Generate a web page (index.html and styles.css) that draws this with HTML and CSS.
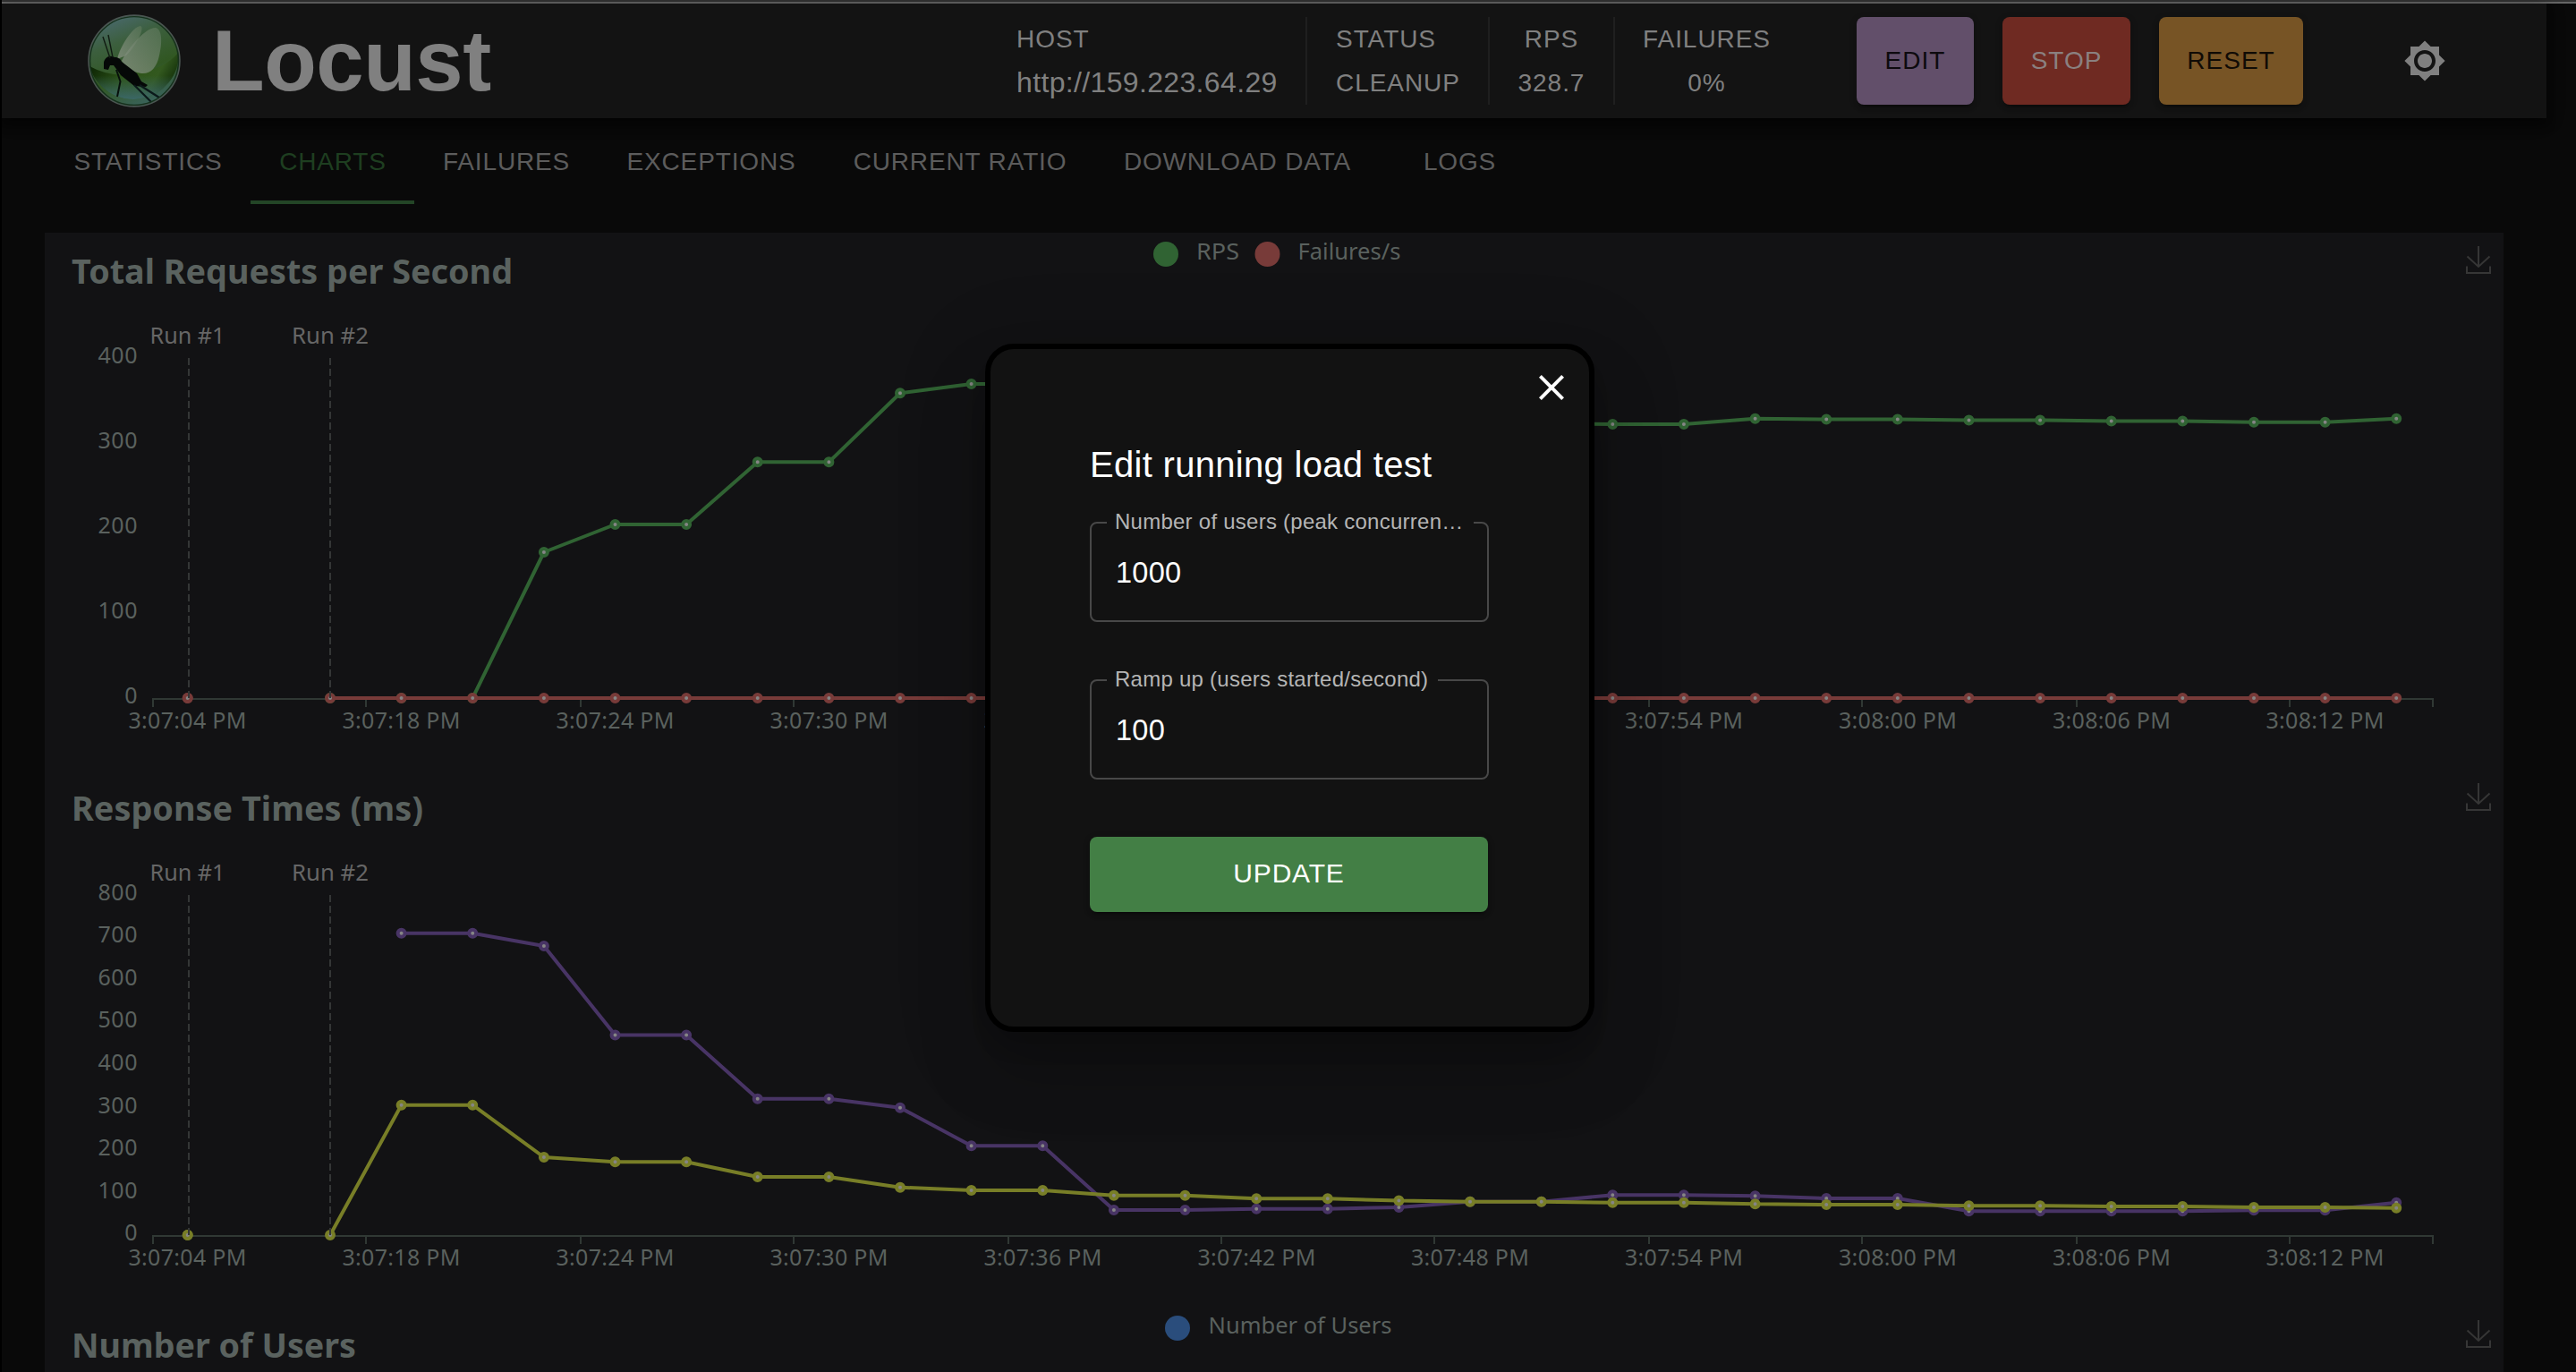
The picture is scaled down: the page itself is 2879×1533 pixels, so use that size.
FILE: index.html
```html
<!DOCTYPE html>
<html lang="en">
<head>
<meta charset="utf-8">
<title>Locust</title>
<link rel="stylesheet" href="styles.css">
</head>
<body>
<div class="progress"></div>
<header class="topbar">
  <svg class="logo" viewBox="0 0 104 104" aria-hidden="true">
    <defs>
      <linearGradient id="glass" x1="0.2" y1="0" x2="0.6" y2="1">
        <stop offset="0" stop-color="#4b6a72"/><stop offset="0.3" stop-color="#3c5f3e"/><stop offset="0.65" stop-color="#315722"/><stop offset="1" stop-color="#3a635c"/>
      </linearGradient>
      <linearGradient id="lower" x1="0" y1="0.3" x2="1" y2="0.6">
        <stop offset="0" stop-color="#0c2404"/><stop offset="0.4" stop-color="#2c5218"/><stop offset="0.75" stop-color="#33591f"/><stop offset="1" stop-color="#0d2805"/>
      </linearGradient>
      <linearGradient id="glow" x1="0" y1="0" x2="0" y2="1">
        <stop offset="0.5" stop-color="#3b6766" stop-opacity="0"/><stop offset="1" stop-color="#3b6766"/>
      </linearGradient>
      <linearGradient id="wing" x1="0" y1="1" x2="1" y2="0">
        <stop offset="0" stop-color="#8b9486"/><stop offset="1" stop-color="#587456"/>
      </linearGradient>
    </defs>
    <circle cx="52" cy="52" r="51" fill="url(#glass)"/>
    <path d="M2 58Q24 70 48 67Q86 62 102 42A51 51 0 0 1 2 58Z" fill="url(#lower)"/>
    <path d="M2 58Q24 70 48 67Q86 62 102 42A51 51 0 0 1 2 58Z" fill="url(#glow)"/>
    <path d="M33 50C36 36 50 14 59 13C64 14 56 33 43 46Z" fill="url(#wing)" opacity=".75"/>
    <path d="M38 52C46 36 66 14 76 15C84 17 83 34 80 46C77 60 70 67 60 66C50 65 42 58 38 52Z" fill="url(#wing)" opacity=".75"/>
    <path d="M18 54C19 48 25 45 30 48C34 48 37 50 38 53L55 66L60 75L67 79L65 81L52 80L37 68L29 57L25 57L23 62L18 61Z" fill="#050807"/>
    <path d="M17 25L25 49M23 23L28 48" fill="none" stroke="#101b12" stroke-width="1.4"/>
    <path d="M32 62L36.5 75L33 92" fill="none" stroke="#07100b" stroke-width="2"/>
    <path d="M52 79L71 98M58 79L80 93" fill="none" stroke="#0b191a" stroke-width="2.2"/>
    <circle cx="52" cy="52" r="51" fill="none" stroke="#4c5652" stroke-width="1.5"/>
    <circle cx="52" cy="52" r="49.4" fill="none" stroke="#16301c" stroke-width="1.4"/>
  </svg>
  <h1 class="brand">Locust</h1>
  <div class="stats">
    <div class="stat stat-host"><span>HOST</span><span class="host-url">http://159.223.64.29</span></div>
    <div class="stat stat-status"><span>STATUS</span><span>CLEANUP</span></div>
    <div class="stat stat-rps"><span>RPS</span><span>328.7</span></div>
    <div class="stat stat-fail"><span>FAILURES</span><span>0%</span></div>
  </div>
  <div class="actions">
    <button class="btn btn-edit">EDIT</button>
    <button class="btn btn-stop">STOP</button>
    <button class="btn btn-reset">RESET</button>
  </div>
  <svg class="theme-icon" viewBox="0 0 24 24"><path d="M20 8.69V4h-4.69L12 .69 8.69 4H4v4.69L.69 12 4 15.31V20h4.69L12 23.31 15.31 20H20v-4.69L23.31 12 20 8.69zM12 18c-3.31 0-6-2.69-6-6s2.69-6 6-6 6 2.69 6 6-2.69 6-6 6zm0-10c-2.21 0-4 1.79-4 4s1.79 4 4 4 4-1.79 4-4-1.79-4-4-4z"/></svg>
</header>
<nav class="tabs">
  <a class="tab tab-statistics">STATISTICS</a>
  <a class="tab tab-charts active">CHARTS</a>
  <a class="tab tab-failures">FAILURES</a>
  <a class="tab tab-exceptions">EXCEPTIONS</a>
  <a class="tab tab-ratio">CURRENT RATIO</a>
  <a class="tab tab-download">DOWNLOAD DATA</a>
  <a class="tab tab-logs">LOGS</a>
</nav>
<main class="charts">
  <svg class="chart" viewBox="50 260 2748 600">
    <defs>
      <marker id="dot-green" markerUnits="userSpaceOnUse" markerWidth="14" markerHeight="14" refX="7" refY="7"><circle class="dot green" cx="7" cy="7" r="4"/></marker>
      <marker id="dot-red" markerUnits="userSpaceOnUse" markerWidth="14" markerHeight="14" refX="7" refY="7"><circle class="dot red" cx="7" cy="7" r="4"/></marker>
      <marker id="dot-purple" markerUnits="userSpaceOnUse" markerWidth="14" markerHeight="14" refX="7" refY="7"><circle class="dot purple" cx="7" cy="7" r="4"/></marker>
      <marker id="dot-yellow" markerUnits="userSpaceOnUse" markerWidth="14" markerHeight="14" refX="7" refY="7"><circle class="dot yellow" cx="7" cy="7" r="4"/></marker>
      <g id="axis">
        <path class="axis" d="M170 781H2720M171 781v9M409 781v9M649 781v9M887 781v9M1127 781v9M1365 781v9M1603 781v9M1843 781v9M2081 781v9M2321 781v9M2559 781v9M2719 781v9"/>
        <g class="label middle">
          <text x="209.5" y="813.5" textLength="132">3:07:04 PM</text>
          <text x="448.5" y="813.5" textLength="132">3:07:18 PM</text>
          <text x="687.5" y="813.5" textLength="132">3:07:24 PM</text>
          <text x="926.5" y="813.5" textLength="132">3:07:30 PM</text>
          <text x="1165.5" y="813.5" textLength="132">3:07:36 PM</text>
          <text x="1404.5" y="813.5" textLength="132">3:07:42 PM</text>
          <text x="1643" y="813.5" textLength="132">3:07:48 PM</text>
          <text x="1882" y="813.5" textLength="132">3:07:54 PM</text>
          <text x="2121" y="813.5" textLength="132">3:08:00 PM</text>
          <text x="2360" y="813.5" textLength="132">3:08:06 PM</text>
          <text x="2598.5" y="813.5" textLength="132">3:08:12 PM</text>
        </g>
      </g>
      <g id="runs">
        <path class="run-line" d="M211 400V780M369 400V780"/>
        <g class="run-label middle">
          <text x="209.5" y="384" textLength="84" lengthAdjust="spacingAndGlyphs">Run #1</text>
          <text x="369" y="384" textLength="86" lengthAdjust="spacingAndGlyphs">Run #2</text>
        </g>
      </g>
      <path id="download" class="download" d="M2770 275V298M2757.5 286.5L2770 298L2782.500 286.5M2757 297.5V305H2783V297.5"/>
    </defs>
    <text class="title" x="80" y="317" textLength="493" lengthAdjust="spacingAndGlyphs">Total Requests per Second</text>
    <circle class="fill-green" cx="1303" cy="284" r="14"/>
    <text class="label" x="1337" y="290" textLength="48" lengthAdjust="spacingAndGlyphs">RPS</text>
    <circle class="fill-red" cx="1416.5" cy="284" r="14"/>
    <text class="label" x="1450.500" y="290" textLength="115" lengthAdjust="spacingAndGlyphs">Failures/s</text>
    <use href="#download"/>
    <g class="label end">
      <text x="153.500" y="405.5" textLength="44">400</text>
      <text x="153.500" y="500.8" textLength="44">300</text>
      <text x="153.500" y="596" textLength="44">200</text>
      <text x="153.500" y="691" textLength="44">100</text>
      <text x="153.500" y="786">0</text>
    </g>
    <use href="#axis"/>
    <polyline class="line green" points="369,780 448.6,780 528.2,780 607.9,617 687.5,586 767.1,586 846.7,516.3 926.4,516.3 1006,439.3 1085.6,429 1165.3,429 1244.9,440 1324.5,450 1404.2,458 1483.8,465 1563.4,470 1643,473 1722.7,473.4 1802.3,474 1881.9,474 1961.6,467.8 2041.2,468.5 2120.8,468.5 2200.5,469.4 2280.1,469.4 2359.7,470.4 2439.3,470.4 2519,471.8 2598.6,471.8 2678.2,467.7"/>
    <polyline class="line red" points="209.7,780 209.7,780"/>
    <polyline class="line red" points="369,780 448.6,780 528.2,780 607.9,780 687.5,780 767.1,780 846.7,780 926.4,780 1006,780 1085.6,780 1165.3,780 1244.9,780 1324.5,780 1404.2,780 1483.8,780 1563.4,780 1643,780 1722.7,780 1802.3,780 1881.9,780 1961.6,780 2041.2,780 2120.8,780 2200.5,780 2280.1,780 2359.7,780 2439.3,780 2519,780 2598.6,780 2678.2,780"/>
    <use href="#runs"/>
  </svg>
  <svg class="chart" viewBox="50 860 2748 600">
    <text class="title" x="80" y="917" textLength="393" lengthAdjust="spacingAndGlyphs">Response Times (ms)</text>
    <use href="#download" y="600"/>
    <g class="label end">
      <text x="153.500" y="1005.5" textLength="44">800</text>
      <text x="153.500" y="1053.2" textLength="44">700</text>
      <text x="153.500" y="1100.8" textLength="44">600</text>
      <text x="153.500" y="1148.4" textLength="44">500</text>
      <text x="153.500" y="1196" textLength="44">400</text>
      <text x="153.500" y="1243.6" textLength="44">300</text>
      <text x="153.500" y="1291" textLength="44">200</text>
      <text x="153.500" y="1338.5" textLength="44">100</text>
      <text x="153.500" y="1386">0</text>
    </g>
    <use href="#axis" y="600"/>
    <polyline class="line purple" points="448.6,1042.8 528.2,1042.8 607.9,1057 687.5,1156.6 767.1,1156.6 846.7,1227.8 926.4,1227.8 1006,1237.7 1085.6,1280.3 1165.3,1280.3 1244.9,1352 1324.5,1352 1404.2,1350.7 1483.8,1350.7 1563.4,1349 1643,1342.7 1722.7,1342.7 1802.3,1335.3 1881.9,1335.3 1961.6,1336.2 2041.2,1339 2120.8,1339 2200.5,1353.3 2280.1,1353.3 2359.7,1353.3 2439.3,1353.3 2519,1352.3 2598.6,1352.3 2678.2,1343.7"/>
    <polyline class="line yellow" points="209.7,1380 209.7,1380"/>
    <polyline class="line yellow" points="369,1380 448.6,1234.7 528.2,1234.7 607.9,1293 687.5,1298.2 767.1,1298.2 846.7,1315 926.4,1315 1006,1326.7 1085.6,1330 1165.3,1330 1244.9,1335.7 1324.5,1335.7 1404.2,1339.3 1483.8,1339.3 1563.4,1341.5 1643,1342.7 1722.7,1342.7 1802.3,1343.7 1881.9,1343.7 1961.6,1345.3 2041.2,1346 2120.8,1346 2200.5,1347.3 2280.1,1347.3 2359.7,1348 2439.3,1348 2519,1349 2598.6,1349 2678.2,1349.7"/>
    <use href="#runs" y="600"/>
  </svg>
  <svg class="chart chart-clipped" viewBox="50 1460 2748 73">
    <text class="title" x="80" y="1517" textLength="318" lengthAdjust="spacingAndGlyphs">Number of Users</text>
    <circle class="fill-blue" cx="1316" cy="1484" r="14"/>
    <text class="label" x="1350.500" y="1490" textLength="205" lengthAdjust="spacingAndGlyphs">Number of Users</text>
    <use href="#download" y="1200"/>
  </svg>
</main>
<section class="modal">
  <svg class="close" viewBox="0 0 24 24"><path d="M19 6.41 17.59 5 12 10.59 6.41 5 5 6.41 10.59 12 5 17.59 6.41 19 12 13.41 17.59 19 19 17.59 13.41 12z"/></svg>
  <h2 class="modal-title">Edit running load test</h2>
  <fieldset class="field"><legend>Number of users (peak concurren…</legend><div class="value">1000</div></fieldset>
  <fieldset class="field"><legend>Ramp up (users started/second)</legend><div class="value">100</div></fieldset>
  <button class="update">UPDATE</button>
</section>
</body>
</html>
```
FILE: styles.css
```css
* { box-sizing: border-box; }
html { overflow: hidden; background: #000; }
body {
  margin: 0 0 0 2px;
  height: 1533px;
  overflow: hidden;
  background: #090909;
  font-family: "Liberation Sans", Arial, sans-serif;
  color: #808080;
}
button { border: 0; font-family: inherit; padding: 0; }

.progress { height: 4px; background: linear-gradient(#333 50%, #666 50%); }

.topbar {
  display: flex;
  align-items: center;
  width: 2844px;
  height: 128px;
  padding-left: 96px;
  background: #131313;
  box-shadow: 0 4px 8px -2px rgba(0,0,0,.4), 0 8px 10px rgba(0,0,0,.28), 0 2px 20px rgba(0,0,0,.24);
}
.logo { width: 104px; height: 104px; flex: none; }
.brand { margin: 0 0 0 35px; width: 899px; font-size: 96px; line-height: 128px; font-weight: 700; letter-spacing: -.5px; flex: none; }

.stats { display: flex; height: 98px; }
.stat {
  display: flex;
  flex-direction: column;
  align-items: center;
  flex: none;
  font-size: 28px;
  line-height: 49px;
  letter-spacing: .95px;
  white-space: nowrap;
}
.stat + .stat { border-left: 2px solid #1f1f1f; }
.stat-host { width: 323px; align-items: flex-start; }
.host-url { font-size: 32px; letter-spacing: .35px; }
.stat-status { width: 204px; align-items: flex-start; padding-left: 32px; }
.stat-rps { width: 140px; }
.stat-fail { width: 206px; padding-left: 1px; }

.actions { display: flex; gap: 32px; margin-left: 66px; }
.btn {
  height: 98px;
  border-radius: 8px;
  font-size: 28px;
  letter-spacing: 1px;
  box-shadow: 0 6px 2px -4px rgba(0,0,0,.2), 0 4px 4px rgba(0,0,0,.14), 0 2px 10px rgba(0,0,0,.12);
}
.btn-edit { width: 131px; background: #624f6a; color: #0d0a0e; }
.btn-stop { width: 143px; background: #6f2a22; color: #8a8080; }
.btn-reset { width: 161px; background: #775425; color: #100b05; }
.theme-icon { width: 48px; height: 48px; margin-left: 112px; fill: #808080; }

.tabs { display: flex; height: 96px; margin: 0 0 32px 48px; }
.tab {
  flex: none;
  padding-left: 1px;
  font-size: 28px;
  line-height: 97px;
  letter-spacing: .85px;
  text-align: center;
  color: #5c5c5c;
}
.tab.active { color: #1e3e20; box-shadow: inset 0 -4px #234526; }
.tab-statistics { width: 230px; }
.tab-charts { width: 183px; }
.tab-failures { width: 205px; }
.tab-exceptions { width: 253px; }
.tab-ratio { width: 303px; }
.tab-download { width: 317px; }
.tab-logs { width: 180px; }

.charts { width: 2748px; margin-left: 48px; background: #121214; }
.chart { display: block; width: 2748px; height: 600px; font-family: "Noto Sans", "Open Sans", sans-serif; }
.chart-clipped { height: 73px; }
.title { font-size: 37px; font-weight: 700; fill: #5a625f; }
.label { font-size: 25px; fill: #5a615e; }
.run-label { font-size: 25px; fill: #666; }
.middle { text-anchor: middle; }
.end { text-anchor: end; }
.axis { fill: none; stroke: #303834; stroke-width: 2; }
.run-line { fill: none; stroke: #343636; stroke-width: 2; stroke-dasharray: 8 4; }
.download { fill: none; stroke: #363636; stroke-width: 2; }
.line { fill: none; stroke-width: 4; stroke-linejoin: bevel; }
.dot { fill: #858585; stroke-width: 4; }
.green { stroke: #306333; }
.red { stroke: #783b39; }
.purple { stroke: #483465; }
.yellow { stroke: #787e27; }
.line.green { marker: url(#dot-green); }
.line.red { marker: url(#dot-red); }
.line.purple { marker: url(#dot-purple); }
.line.yellow { marker: url(#dot-yellow); }
.fill-green { fill: #306333; }
.fill-red { fill: #783b39; }
.fill-blue { fill: #2a4d7c; }

.modal {
  position: absolute;
  left: 1101px;
  top: 384px;
  width: 681px;
  height: 769px;
  padding: 97px 112px 0 111px;
  border: 6px solid #000;
  border-radius: 32px;
  background: #121212;
  color: #fff;
  box-shadow: 0 22px 30px -14px rgba(0,0,0,.2), 0 48px 76px 6px rgba(0,0,0,.14), 0 18px 92px 16px rgba(0,0,0,.12);
}
.close { position: absolute; right: 18px; top: 19px; width: 48px; height: 48px; fill: #fff; }
.modal-title { margin: 0 0 19px; font-size: 40px; line-height: 64px; font-weight: 400; letter-spacing: .3px; white-space: nowrap; }
.field {
  height: 125px;
  margin: 0 0 51px;
  padding: 0 0 0 17px;
  border: 2px solid #484848;
  border-radius: 8px;
  min-width: 0;
}
.field legend { height: 28px; padding: 0 11px 0 9px; font-size: 24px; line-height: 25px; letter-spacing: .25px; color: #b5b5b5; white-space: nowrap; }
.value { padding-left: 10px; font-size: 32.5px; line-height: 85px; letter-spacing: .3px; }
.update {
  display: block;
  width: 445px;
  height: 84px;
  margin-top: 64px;
  padding-bottom: 2px;
  border-radius: 8px;
  background: #437f45;
  color: #fff;
  font-size: 30px;
  letter-spacing: .8px;
  box-shadow: 0 6px 2px -4px rgba(0,0,0,.2), 0 4px 4px rgba(0,0,0,.14), 0 2px 10px rgba(0,0,0,.12);
}
```
